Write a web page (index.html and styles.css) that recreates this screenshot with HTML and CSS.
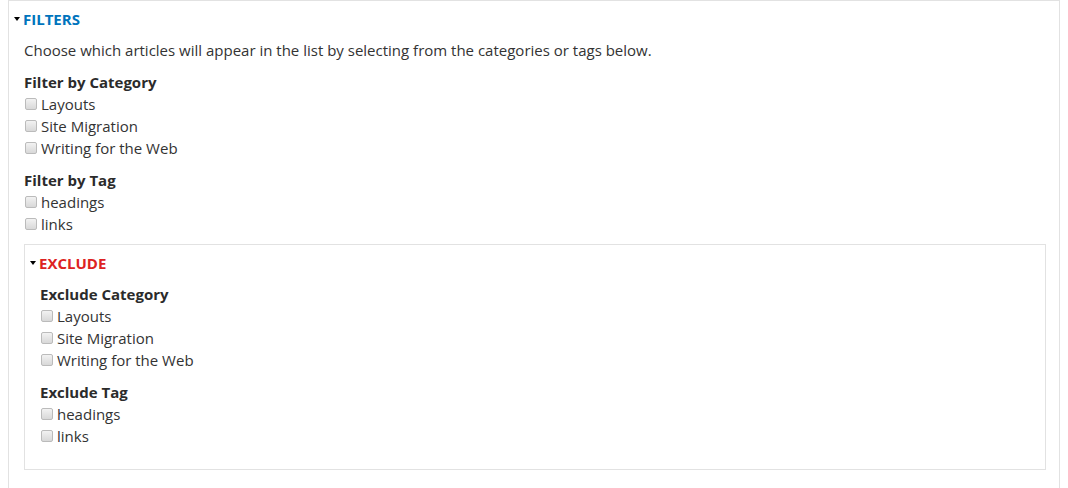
FILE: index.html
```html
<!DOCTYPE html>
<html>
<head>
<meta charset="utf-8">
<link rel="stylesheet" href="styles.css">
</head>
<body>
<div class="fieldset outer">
  <div class="legend filters"><span class="tri"></span>FILTERS</div>
  <div class="content">
    <p class="desc">Choose which articles will appear in the list by selecting from the categories or tags below.</p>
    <div class="group">
      <div class="group-title">Filter by Category</div>
      <label class="item"><span class="cb"></span>Layouts</label>
      <label class="item"><span class="cb"></span>Site Migration</label>
      <label class="item"><span class="cb"></span>Writing for the Web</label>
    </div>
    <div class="group">
      <div class="group-title">Filter by Tag</div>
      <label class="item"><span class="cb"></span>headings</label>
      <label class="item"><span class="cb"></span>links</label>
    </div>
    <div class="fieldset inner">
      <div class="legend exclude"><span class="tri"></span>EXCLUDE</div>
      <div class="content">
        <div class="group">
          <div class="group-title">Exclude Category</div>
          <label class="item"><span class="cb"></span>Layouts</label>
          <label class="item"><span class="cb"></span>Site Migration</label>
          <label class="item"><span class="cb"></span>Writing for the Web</label>
        </div>
        <div class="group">
          <div class="group-title">Exclude Tag</div>
          <label class="item"><span class="cb"></span>headings</label>
          <label class="item"><span class="cb"></span>links</label>
        </div>
      </div>
    </div>
  </div>
</div>
</body>
</html>
```
FILE: styles.css
```css
html, body {
  margin: 0;
  padding: 0;
  background: #fff;
}
body {
  padding: 0 8px;
  font-family: "Open Sans", "Liberation Sans", sans-serif;
  font-size: 15px;
  color: #333;
}
.fieldset {
  border: 1px solid #e2e2e2;
}
.outer {
  width: 1052px;
  height: 488px;
  box-sizing: border-box;
  border-bottom: none;
}
.legend {
  display: flex;
  align-items: center;
  font-weight: 700;
  font-size: 15px;
  height: 20px;
  padding: 8px 0 0 5px;
}
.filters {
  color: #0074bd;
}
.exclude {
  color: #dd2222;
}
.tri {
  width: 0;
  height: 0;
  border-left: 3.5px solid transparent;
  border-right: 3.5px solid transparent;
  border-top: 4px solid #000;
  margin-right: 3px;
  margin-bottom: 1px;
}
.outer > .content {
  padding: 0 13px 0 15px;
}
.desc {
  margin: 10px 0 0 0;
  line-height: 22px;
}
.group {
  margin-top: 10px;
}
.group-title {
  font-weight: 700;
  line-height: 22px;
  color: #2b2b2b;
}
.item {
  display: flex;
  align-items: center;
  line-height: 22px;
}
.cb {
  width: 10px;
  height: 10px;
  border: 1px solid #bbb;
  border-radius: 2px;
  background: linear-gradient(#f2f2f2, #d8d8d8);
  margin: 0 4px 0 1px;
  box-sizing: content-box;
}
.inner {
  margin-top: 9px;
  height: 226px;
  box-sizing: border-box;
}
.inner > .content {
  padding: 0 15px;
}
```
